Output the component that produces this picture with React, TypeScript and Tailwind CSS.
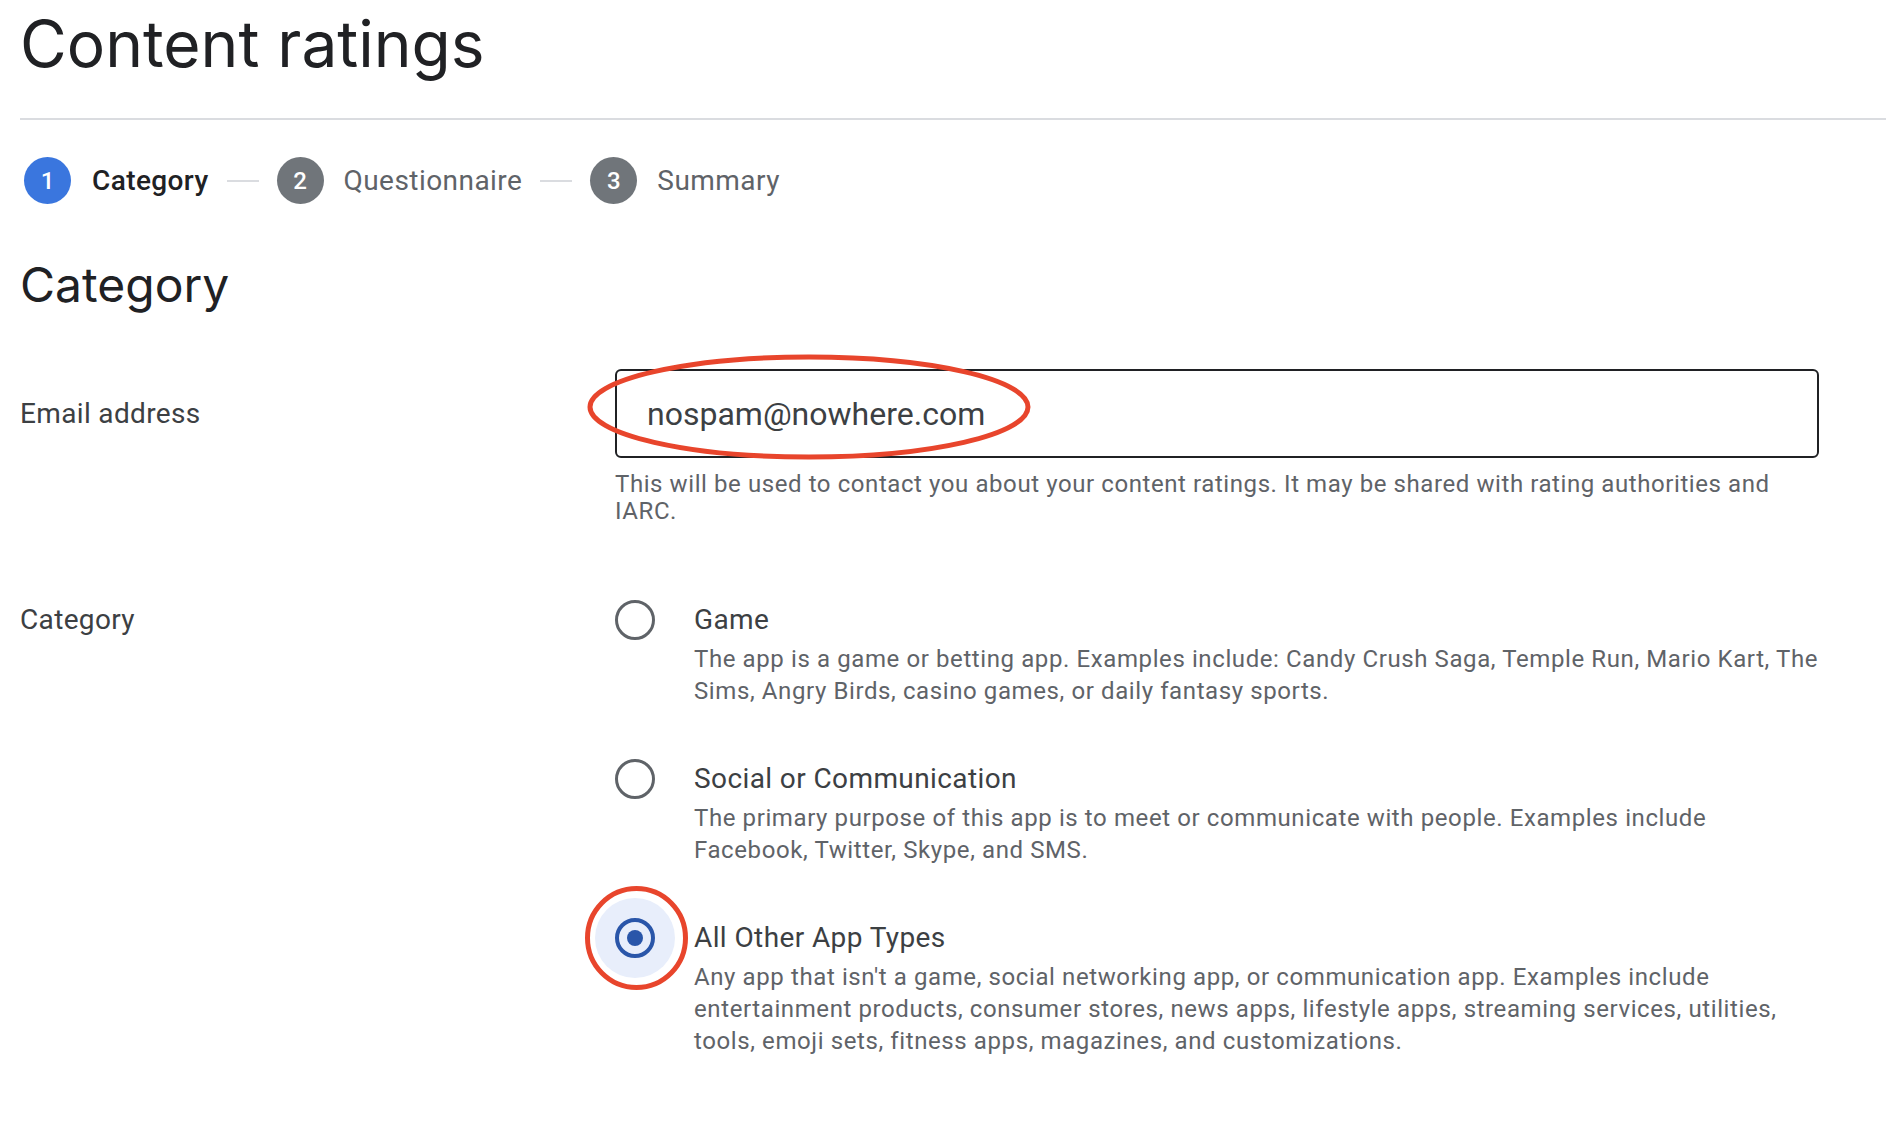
import React from "react";

type Option = { id: string; title: string; desc: string };

const options: Option[] = [
  {
    id: "game",
    title: "Game",
    desc: "The app is a game or betting app. Examples include: Candy Crush Saga, Temple Run, Mario Kart, The Sims, Angry Birds, casino games, or daily fantasy sports.",
  },
  {
    id: "social",
    title: "Social or Communication",
    desc: "The primary purpose of this app is to meet or communicate with people. Examples include Facebook, Twitter, Skype, and SMS.",
  },
  {
    id: "other",
    title: "All Other App Types",
    desc: "Any app that isn't a game, social networking app, or communication app. Examples include entertainment products, consumer stores, news apps, lifestyle apps, streaming services, utilities, tools, emoji sets, fitness apps, magazines, and customizations.",
  },
];

const steps = ["Category", "Questionnaire", "Summary"];

function Stepper() {
  return (
    <div className="mt-[37px] flex items-center">
      {steps.map((s, i) => (
        <React.Fragment key={s}>
          {i > 0 && <div className="mx-[18px] h-[2px] w-[32px] bg-[#dadce0]" />}
          <div className={i === 0 ? "ml-[4px] flex items-center" : "flex items-center"}>
            <div
              className={
                i === 0
                  ? "flex h-[47px] w-[47px] items-center justify-center rounded-full bg-[#3a76de] text-[24px] font-medium text-white"
                  : "flex h-[47px] w-[47px] items-center justify-center rounded-full bg-[#70757a] text-[24px] font-medium text-white"
              }
            >
              {i + 1}
            </div>
            <span
              className={
                i === 0
                  ? "ml-[21px] text-[28px] font-medium tracking-[0.4px] text-[#202124]"
                  : "ml-[20px] text-[28px] tracking-[0.45px] text-[#5f6368]"
              }
            >
              {s}
            </span>
          </div>
        </React.Fragment>
      ))}
    </div>
  );
}

function Radio({ selected }: { selected: boolean }) {
  if (!selected) {
    return <div className="h-[40px] w-[40px] shrink-0 rounded-full border-[3.5px] border-[#5f6368]" />;
  }
  return (
    <div className="relative h-[40px] w-[40px] shrink-0">
      <div className="absolute -inset-[20px] rounded-full bg-[#e8eefb]" />
      <div className="relative flex h-[40px] w-[40px] items-center justify-center rounded-full border-[4px] border-[#2a56a9]">
        <div className="h-[16px] w-[16px] rounded-full bg-[#2a56a9]" />
      </div>
      {/* red annotation circle */}
      <svg className="absolute left-[-30px] top-[-32px]" width="103" height="104" viewBox="0 0 103 104">
        <ellipse cx="51.5" cy="52" rx="49" ry="49.5" fill="none" stroke="#e8452c" strokeWidth="5" />
      </svg>
    </div>
  );
}

export default function App() {
  return (
    <div className="min-h-screen bg-white pl-[20px] font-['Roboto',_'Liberation_Sans',_sans-serif]">
      <h1 className="pt-[6px] font-['Inter',_sans-serif] text-[64px] font-normal leading-[76px] text-[#202124]">
        Content ratings
      </h1>
      <div className="mt-[36px] h-[2px] bg-[#dadce0]" />

      <Stepper />

      <h2 className="mt-[53px] font-['Inter',_sans-serif] text-[48px] font-normal leading-[56px] text-[#202124]">
        Category
      </h2>

      {/* Email row */}
      <div className="mt-[56px] flex items-start">
        <div className="flex h-[89px] w-[595px] shrink-0 items-center text-[28px] leading-[40px] tracking-[0.35px] text-[#3c4043]">
          Email address
        </div>
        <div className="w-[1204px]">
          <div className="relative">
            <div className="flex h-[89px] items-center rounded-[6px] border-2 border-[#202124] px-[30px] text-[32px] text-[#3c4043]">
              nospam@nowhere.com
            </div>
            {/* red annotation ellipse */}
            <svg className="absolute left-[-28px] top-[-15px]" width="444" height="106" viewBox="0 0 444 106">
              <ellipse cx="222" cy="53" rx="219" ry="50" fill="none" stroke="#e8452c" strokeWidth="5" />
            </svg>
          </div>
          <p className="mt-[13px] text-[24px] leading-[27px] tracking-[0.58px] text-[#5f6368]">
            This will be used to contact you about your content ratings. It may be shared with rating authorities and IARC.
          </p>
        </div>
      </div>

      {/* Category row */}
      <div className="mt-[75px] flex items-start">
        <div className="w-[595px] shrink-0 text-[28px] leading-[40px] tracking-[0.35px] text-[#3c4043]">Category</div>
        <div className="flex w-[1204px] flex-col gap-[51.5px]">
          {options.map((o) => (
            <div key={o.id} className="flex items-start">
              <Radio selected={o.id === "other"} />
              <div className="ml-[39px] w-[1126px]">
                <div className="text-[28px] leading-[40px] tracking-[0.4px] text-[#3c4043]">{o.title}</div>
                <p className="mt-[4px] text-[24px] leading-[31.8px] tracking-[0.6px] text-[#5f6368]">{o.desc}</p>
              </div>
            </div>
          ))}
        </div>
      </div>
    </div>
  );
}
